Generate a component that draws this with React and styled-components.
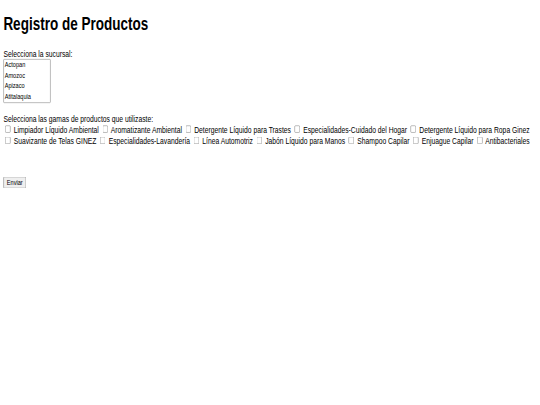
import React from "react";
import styled, { createGlobalStyle } from "styled-components";

const GlobalStyle = createGlobalStyle`
  html, body {
    margin: 0;
    padding: 0;
    background: #ffffff;
    overflow: hidden;
  }
  body {
    font-family: "Liberation Sans", Arial, sans-serif;
    color: #000000;
  }
`;

/* Visible window; the sheet below is drawn larger and scaled into it. */
const Viewport = styled.div`
  width: 540px;
  height: 405px;
  overflow: hidden;
`;

/* The form is laid out on a 1280x720 sheet and shrunk into the window. */
const Sheet = styled.div`
  display: flow-root;
  width: 1280px;
  height: 720px;
  box-sizing: border-box;
  padding: 4px 8px 0;
  font-size: 16px;
  transform: scale(0.421875, 0.5625);
  transform-origin: 0 0;
`;

const Title = styled.h1`
  font-size: 32px;
  font-weight: bold;
  margin: 21.44px 0 25px;
`;

const Form = styled.form`
  display: block;
`;

const FieldLabel = styled.label`
  display: inline;
`;

const BranchList = styled.select`
  font-family: "Liberation Sans", Arial, sans-serif;
  font-size: 13.333px;
  width: 112px;
  border: 1px solid #767676;
  border-radius: 2px;
  color: #000;
  background: #fff;
  overflow-y: hidden;

  option {
    padding: 1px 2px 2px;
  }
`;

const Box = styled.input.attrs({ type: "checkbox" })`
  margin: 3px 3px 3px 4px;
`;

const SubmitButton = styled.button`
  font-family: "Liberation Sans", Arial, sans-serif;
  font-size: 13.333px;
`;

const branches = ["Actopan", "Amozoc", "Apizaco", "Atitalaquia"];

const ranges = [
  "Limpiador Líquido Ambiental",
  "Aromatizante Ambiental",
  "Detergente Líquido para Trastes",
  "Especialidades-Cuidado del Hogar",
  "Detergente Líquido para Ropa Ginez",
  "Suavizante de Telas GINEZ",
  "Especialidades-Lavandería",
  "Línea Automotriz",
  "Jabón Líquido para Manos",
  "Shampoo Capilar",
  "Enjuague Capilar",
  "Antibacteriales",
];

export default function App() {
  return (
    <>
      <GlobalStyle />
      <Viewport>
        <Sheet>
          <Title>Registro de Productos</Title>
          <Form onSubmit={(e) => e.preventDefault()}>
            <FieldLabel htmlFor="sucursal">Selecciona la sucursal:</FieldLabel>
            <br />
            <BranchList id="sucursal" name="sucursal" size={4}>
              {branches.map((b) => (
                <option key={b} value={b}>
                  {b}
                </option>
              ))}
            </BranchList>
            <br />
            <br />
            <FieldLabel>Selecciona las gamas de productos que utilizaste:</FieldLabel>
            <br />
            {ranges.map((r, i) => (
              <React.Fragment key={r}>
                <Box id={`gama-${i}`} name="gamas" value={r} />{" "}
                <label htmlFor={`gama-${i}`}>{r}</label>{" "}
              </React.Fragment>
            ))}
            <br />
            <br />
            <br />
            <br />
            <SubmitButton type="submit">Enviar</SubmitButton>
          </Form>
        </Sheet>
      </Viewport>
    </>
  );
}
